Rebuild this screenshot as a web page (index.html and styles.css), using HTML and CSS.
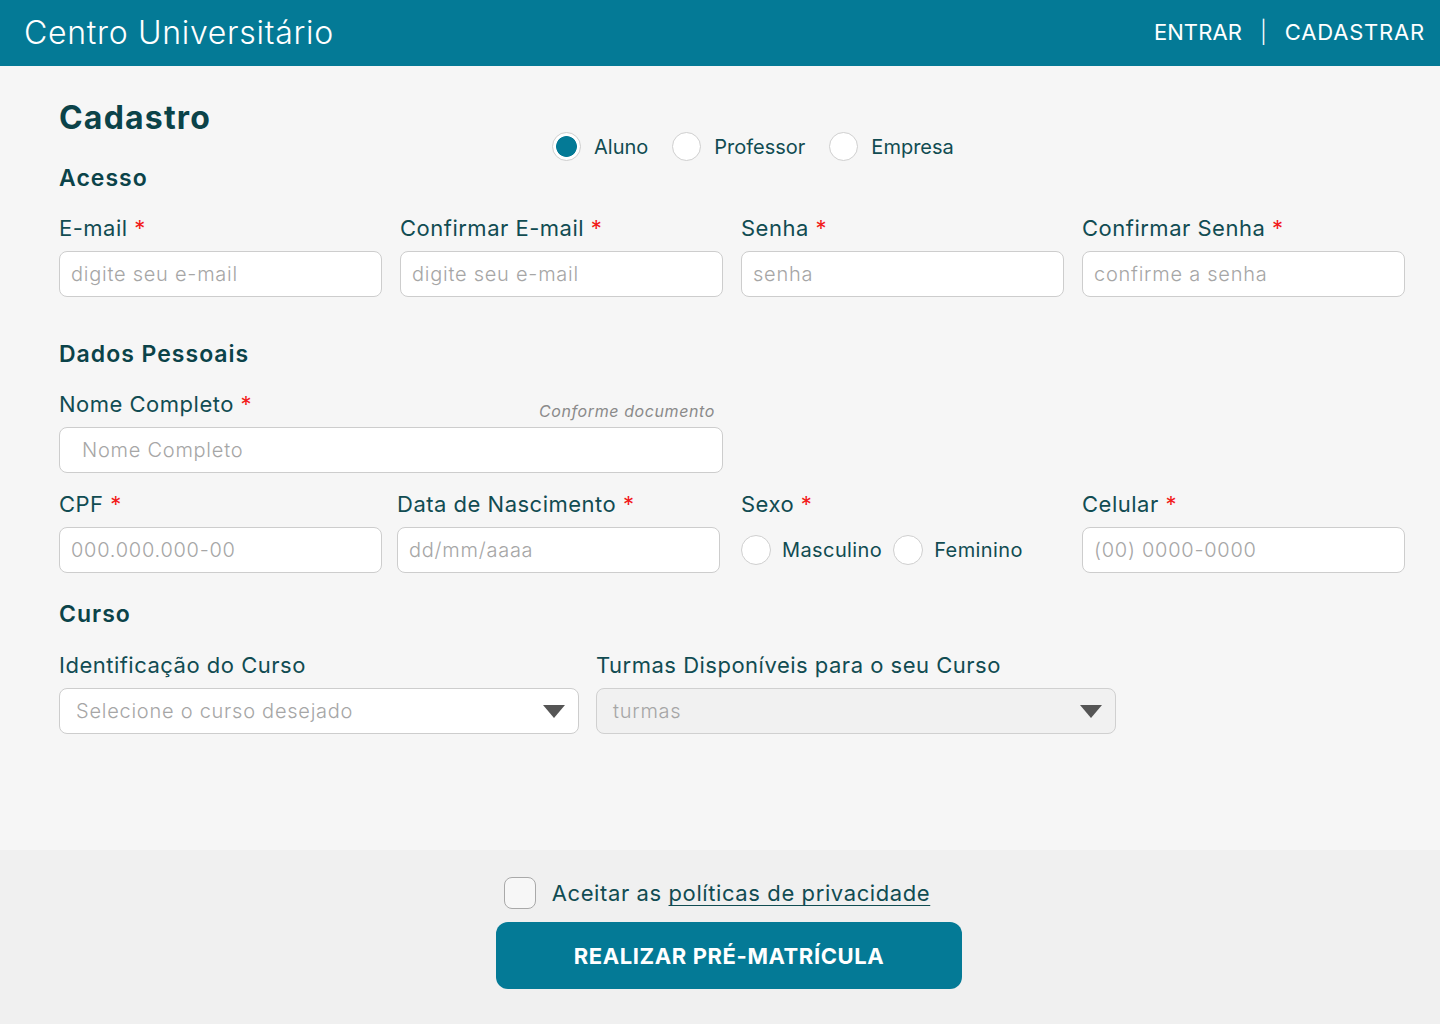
FILE: index.html
```html
<!DOCTYPE html>
<html lang="pt-BR">
<head>
<meta charset="utf-8">
<title>Centro Universitário - Cadastro</title>
<link rel="stylesheet" href="styles.css">
</head>
<body>
<header class="topbar">
  <div class="brand">Centro Universitário</div>
  <nav class="nav">
    <a href="#" class="nav-link">ENTRAR</a>
    <span class="nav-sep">|</span>
    <a href="#" class="nav-link wide">CADASTRAR</a>
  </nav>
</header>

<main class="content">
  <div class="title-row">
    <div class="title-col">
      <h1 class="page-title">Cadastro</h1>
      <h2 class="section-title first">Acesso</h2>
    </div>
    <div class="role-group">
      <label class="radio"><span class="dot checked"></span><span class="radio-text">Aluno</span></label>
      <label class="radio"><span class="dot"></span><span class="radio-text">Professor</span></label>
      <label class="radio"><span class="dot"></span><span class="radio-text">Empresa</span></label>
    </div>
  </div>

  <div class="grid4">
    <div class="field">
      <div class="label">E-mail <span class="req">*</span></div>
      <div class="input"><span class="ph">digite seu e-mail</span></div>
    </div>
    <div class="field">
      <div class="label">Confirmar E-mail <span class="req">*</span></div>
      <div class="input"><span class="ph">digite seu e-mail</span></div>
    </div>
    <div class="field">
      <div class="label">Senha <span class="req">*</span></div>
      <div class="input"><span class="ph">senha</span></div>
    </div>
    <div class="field">
      <div class="label">Confirmar Senha <span class="req">*</span></div>
      <div class="input"><span class="ph">confirme a senha</span></div>
    </div>
  </div>

  <h2 class="section-title personal">Dados Pessoais</h2>

  <div class="grid4">
    <div class="field span2">
      <div class="label-row">
        <div class="label">Nome Completo <span class="req">*</span></div>
        <div class="hint">Conforme documento</div>
      </div>
      <div class="input wide-pad"><span class="ph">Nome Completo</span></div>
    </div>
  </div>

  <div class="grid4 row-gap">
    <div class="field">
      <div class="label">CPF <span class="req">*</span></div>
      <div class="input"><span class="ph">000.000.000-00</span></div>
    </div>
    <div class="field shift-left">
      <div class="label">Data de Nascimento <span class="req">*</span></div>
      <div class="input"><span class="ph">dd/mm/aaaa</span></div>
    </div>
    <div class="field">
      <div class="label">Sexo <span class="req">*</span></div>
      <div class="sex-group">
        <label class="radio small"><span class="dot"></span><span class="radio-text">Masculino</span></label>
        <label class="radio small"><span class="dot"></span><span class="radio-text">Feminino</span></label>
      </div>
    </div>
    <div class="field">
      <div class="label">Celular <span class="req">*</span></div>
      <div class="input"><span class="ph">(00) 0000-0000</span></div>
    </div>
  </div>

  <h2 class="section-title course">Curso</h2>

  <div class="grid-course">
    <div class="field">
      <div class="label">Identificação do Curso</div>
      <div class="select"><span class="ph">Selecione o curso desejado</span><span class="caret"></span></div>
    </div>
    <div class="field">
      <div class="label">Turmas Disponíveis para o seu Curso</div>
      <div class="select disabled"><span class="ph">turmas</span><span class="caret"></span></div>
    </div>
  </div>
</main>

<footer class="footer">
  <label class="accept">
    <span class="checkbox"></span>
    <span class="accept-text">Aceitar as <a href="#" class="policy">políticas de privacidade</a></span>
  </label>
  <button class="submit" type="button">REALIZAR PRÉ-MATRÍCULA</button>
</footer>
</body>
</html>
```

FILE: styles.css
```css
* { box-sizing: border-box; }

html, body {
  margin: 0;
  padding: 0;
}

body {
  width: 1440px;
  height: 1024px;
  font-family: Inter, "Noto Sans", "Liberation Sans", sans-serif;
  color: #0f4a50;
  background: #f6f6f6;
  display: flex;
  flex-direction: column;
  overflow: hidden;
}

/* Header */
.topbar {
  height: 66px;
  background: #047a96;
  display: flex;
  align-items: center;
  justify-content: space-between;
  padding: 0 15px 0 24px;
  color: #fff;
}

.brand {
  font-size: 32px;
  font-weight: 300;
  letter-spacing: 0.7px;
  margin-top: -2px;
}

.nav {
  display: flex;
  align-items: center;
  gap: 18px;
  font-size: 22px;
  font-weight: 400;
  margin-top: -2px;
}

.nav-link {
  color: #fff;
  text-decoration: none;
  letter-spacing: 0.1px;
}

.nav-link.wide {
  letter-spacing: 0.8px;
}

.nav-sep {
  font-weight: 300;
}

/* Content */
.content {
  flex: 1;
  padding: 30px 35px 0 59px;
}

.title-row {
  display: grid;
  grid-template-columns: 494px auto;
  align-items: center;
}

.page-title {
  margin: 0;
  font-size: 32px;
  line-height: 44px;
  font-weight: 700;
  letter-spacing: 1.2px;
  color: #0b4349;
}

.section-title {
  margin: 0;
  font-size: 23px;
  line-height: 30px;
  font-weight: 600;
  letter-spacing: 1px;
  color: #0b4349;
}

.section-title.first { margin-top: 23px; }
.section-title.personal { margin-top: 42px; }
.section-title.course { margin-top: 26px; }

.role-group {
  display: flex;
  align-items: center;
  gap: 24px;
  margin-top: 4px;
  margin-left: -1px;
}

.radio {
  display: flex;
  align-items: center;
  gap: 13px;
  font-size: 20px;
  color: #114c52;
}

.dot {
  width: 29px;
  height: 29px;
  border-radius: 50%;
  background: #fff;
  border: 1px solid #cfcfcf;
  flex: none;
}

.dot.checked {
  background: radial-gradient(circle, #047a96 0 10px, #fff 10.8px);
}

.radio.small { gap: 11px; }
.radio.small .radio-text { letter-spacing: 0.4px; }
.radio.small .dot { width: 30px; height: 30px; }

.grid4 {
  display: grid;
  grid-template-columns: repeat(4, 1fr);
  column-gap: 18px;
  margin-top: 21px;
}

.grid4.row-gap { margin-top: 17px; }

.span2 { grid-column: span 2; }

.shift-left { margin-left: -3px; margin-right: 3px; }

.field {
  display: flex;
  flex-direction: column;
}

.label {
  font-size: 22px;
  line-height: 28px;
  font-weight: 400;
  letter-spacing: 0.5px;
  color: #114c52;
  margin-bottom: 9px;
  white-space: nowrap;
}

.req {
  color: #f21a1a;
}

.label-row {
  display: flex;
  justify-content: space-between;
  align-items: flex-start;
}

.hint {
  font-size: 16px;
  font-style: italic;
  letter-spacing: 0.6px;
  color: #8a8a8a;
  padding-top: 11px;
  padding-right: 8px;
}

.input, .select {
  height: 46px;
  background: #fff;
  border: 1px solid #cdcdcd;
  border-radius: 8px;
  display: flex;
  align-items: center;
  padding: 0 11px;
}

.input.wide-pad { padding-left: 22px; }

.ph {
  font-size: 20px;
  color: #a6a6a6;
  font-weight: 300;
  letter-spacing: 0.75px;
  white-space: nowrap;
}

.sex-group {
  height: 46px;
  display: flex;
  align-items: center;
  gap: 11px;
}

/* Course */
.grid-course {
  display: grid;
  grid-template-columns: 520px 520px;
  column-gap: 17px;
  margin-top: 22px;
}

.select {
  justify-content: space-between;
  padding: 0 13px 0 16px;
}

.select.disabled {
  background: #f1f1f1;
  border-color: #d0d0d0;
}

.caret {
  width: 0;
  height: 0;
  border-left: 11px solid transparent;
  border-right: 11px solid transparent;
  border-top: 13px solid #555;
}

/* Footer */
.footer {
  height: 174px;
  background: #f0f0f0;
  display: flex;
  flex-direction: column;
  align-items: center;
  padding-top: 27px;
}

.accept {
  display: flex;
  align-items: center;
  gap: 16px;
  margin-left: -6px;
}

.checkbox {
  width: 32px;
  height: 32px;
  border: 1px solid #a9a9a9;
  border-radius: 8px;
  background: #f7f7f7;
}

.accept-text {
  font-size: 22px;
  letter-spacing: 0.6px;
  color: #114c52;
}

.policy {
  color: #114c52;
  text-decoration: underline;
  text-underline-offset: 4px;
  text-decoration-thickness: 1px;
}

.submit {
  margin-top: 13px;
  margin-left: 18px;
  width: 466px;
  height: 67px;
  border: none;
  border-radius: 12px;
  background: #047a96;
  color: #fff;
  font-family: inherit;
  font-size: 22px;
  font-weight: 700;
  letter-spacing: 0.6px;
}
```
